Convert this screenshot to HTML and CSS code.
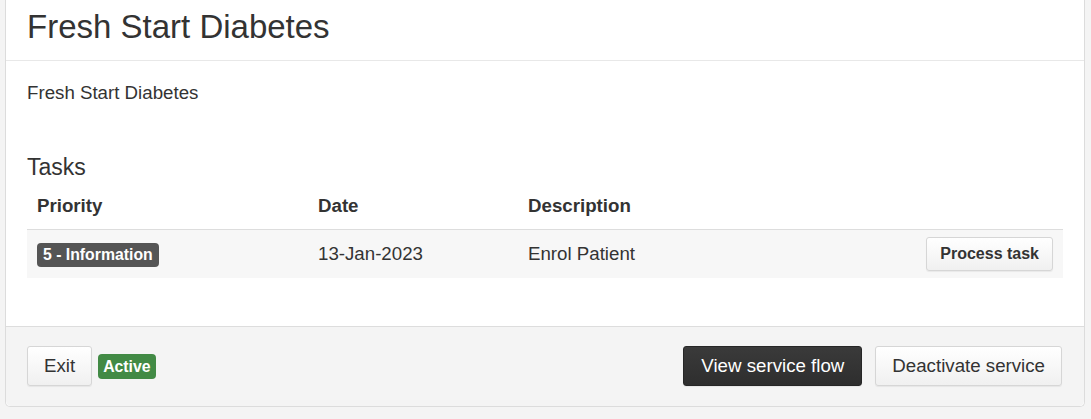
FILE: index.html
```html
<!DOCTYPE html>
<html lang="en">
<head>
<meta charset="utf-8">
<title>Fresh Start Diabetes</title>
<link rel="stylesheet" href="styles.css">
</head>
<body>
<div class="page">
  <section class="panel">
    <header class="panel-head">
      <h1 class="title">Fresh Start Diabetes</h1>
    </header>
    <div class="panel-body">
      <p class="desc">Fresh Start Diabetes</p>
      <h4 class="section">Tasks</h4>
      <table class="tasks">
        <thead>
          <tr>
            <th class="c-pri">Priority</th>
            <th class="c-date">Date</th>
            <th class="c-desc">Description</th>
            <th class="c-act"></th>
          </tr>
        </thead>
        <tbody>
          <tr>
            <td class="c-pri"><span class="label label-dark">5 - Information</span></td>
            <td class="c-date">13-Jan-2023</td>
            <td class="c-desc">Enrol Patient</td>
            <td class="c-act"><button class="btn btn-sm">Process task</button></td>
          </tr>
        </tbody>
      </table>
    </div>
    <footer class="panel-foot">
      <div class="foot-left">
        <button class="btn">Exit</button>
        <span class="label label-green">Active</span>
      </div>
      <div class="foot-right">
        <button class="btn btn-dark">View service flow</button>
        <button class="btn">Deactivate service</button>
      </div>
    </footer>
  </section>
</div>
</body>
</html>
```

FILE: styles.css
```css
html, body {
  margin: 0;
  padding: 0;
  background: #f4f4f4;
}
body {
  font-family: "Liberation Sans", Arial, sans-serif;
  font-size: 18.7px;
  line-height: 26.7px;
  color: #333;
}
.page {
  padding: 0 6px 12px 5px;
}
.panel {
  background: #fff;
  border: 1px solid #dcdcdc;
  border-top: none;
  border-radius: 0 0 5px 5px;
}
.panel-head {
  padding: 9px 21px 15px 21px;
  border-bottom: 1px solid #e8e8e8;
}
.title {
  margin: 0;
  font-size: 33px;
  line-height: 36px;
  font-weight: normal;
  color: #333;
}
.panel-body {
  padding: 19px 21px 21px 21px;
}
.desc {
  margin: 0;
}
.section {
  margin: 48px 0 3px 0;
  font-size: 23px;
  line-height: 25px;
  font-weight: normal;
}
.tasks {
  width: 100%;
  border-collapse: collapse;
  margin-bottom: 27px;
}
.tasks th {
  text-align: left;
  font-weight: bold;
  padding: 10px 10px;
  line-height: 26.7px;
}
.tasks td {
  padding: 7px 10px;
  border-top: 1px solid #dddddd;
  background: #f7f7f7;
  vertical-align: middle;
  line-height: 34px;
}
.c-pri { width: 261px; }
.c-date { width: 190px; }
.c-act { text-align: right; white-space: nowrap; }
.tasks td.c-act { line-height: 0; }

.label {
  display: inline-block;
  color: #fff;
  font-weight: bold;
  font-size: 15.8px;
  line-height: 20px;
  padding: 2px 6px 2px 6px;
  border-radius: 4px;
  vertical-align: middle;
}
.label-dark { background: #555; }
.label-green {
  background: #428a45;
  padding: 3px 5px 2px 5px;
}

.btn {
  font-family: "Liberation Sans", Arial, sans-serif;
  font-size: 18.7px;
  line-height: 26px;
  height: 40px;
  padding: 6px 16px;
  color: #333;
  background: linear-gradient(#ffffff, #f0f0f0);
  border: 1px solid #d6d6d6;
  border-radius: 3px;
  box-shadow: 0 1px 1px rgba(0,0,0,0.06);
  cursor: pointer;
  margin: 0;
}
.btn-sm {
  font-size: 16px;
  font-weight: bold;
  line-height: 22px;
  height: 34px;
  padding: 5px 13px;
}
.btn-dark {
  color: #fff;
  padding: 6px 17px;
  background: linear-gradient(#3a3a3a, #2e2e2e);
  border-color: #262626;
}
.panel-foot {
  background: #f4f4f4;
  border-top: 1px solid #dddddd;
  padding: 19px 22px 20px 21px;
  border-radius: 0 0 5px 5px;
  display: flex;
  justify-content: space-between;
  align-items: center;
}
.foot-left, .foot-right {
  display: flex;
  align-items: center;
}
.foot-left { gap: 6px; }
.foot-right { gap: 13px; }
```
